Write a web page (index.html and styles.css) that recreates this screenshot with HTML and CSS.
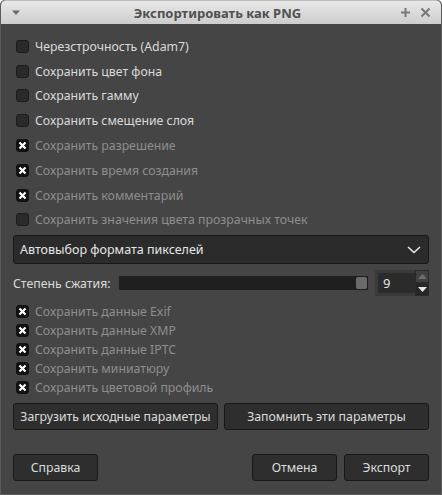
FILE: index.html
```html
<!DOCTYPE html>
<html lang="ru">
<head>
<meta charset="utf-8">
<title>Экспортировать как PNG</title>
<link rel="stylesheet" href="styles.css">
</head>
<body>
<div class="window">
  <div class="titlebar">
    <span class="tb-menu"><svg width="10" height="6" viewBox="0 0 10 6"><path d="M1 0.5h8L5 5z" fill="#6a6a6a"/></svg></span>
    <span class="tb-title">Экспортировать как PNG</span>
    <span class="tb-btns">
      <svg width="11" height="11" viewBox="0 0 11 11"><path d="M5.5 1v9M1 5.5h9" stroke="#777" stroke-width="2"/></svg>
      <svg width="11" height="11" viewBox="0 0 11 11"><path d="M1.5 1.5l8 8M9.5 1.5l-8 8" stroke="#777" stroke-width="2"/></svg>
    </span>
  </div>
  <div class="content">
    <div class="checks">
      <label class="check"><span class="box"></span><span>Черезстрочность (Adam7)</span></label>
      <label class="check"><span class="box"></span><span>Сохранить цвет фона</span></label>
      <label class="check"><span class="box"></span><span>Сохранить гамму</span></label>
      <label class="check"><span class="box"></span><span>Сохранить смещение слоя</span></label>
      <label class="check dim"><span class="box on"><svg width="9" height="9" viewBox="0 0 9 9"><path d="M1.5 1.5l6 6M7.5 1.5l-6 6" stroke="#fff" stroke-width="2.2"/></svg></span><span>Сохранить разрешение</span></label>
      <label class="check dim"><span class="box on"><svg width="9" height="9" viewBox="0 0 9 9"><path d="M1.5 1.5l6 6M7.5 1.5l-6 6" stroke="#fff" stroke-width="2.2"/></svg></span><span>Сохранить время создания</span></label>
      <label class="check dim"><span class="box on"><svg width="9" height="9" viewBox="0 0 9 9"><path d="M1.5 1.5l6 6M7.5 1.5l-6 6" stroke="#fff" stroke-width="2.2"/></svg></span><span>Сохранить комментарий</span></label>
      <label class="check dim"><span class="box"></span><span>Сохранить значения цвета прозрачных точек</span></label>
    </div>
    <div class="combo">
      <span>Автовыбор формата пикселей</span>
      <svg width="14" height="8" viewBox="0 0 14 8"><path d="M1 1l6 5.5L13 1" stroke="#e8e8e8" stroke-width="1.6" fill="none"/></svg>
    </div>
    <div class="compress">
      <span class="clabel">Степень сжатия:</span>
      <div class="trough"><div class="handle"></div></div>
      <div class="spin">
        <div class="spin-entry">9</div>
        <div class="spin-btns">
          <div class="spin-up"><svg width="9" height="5" viewBox="0 0 9 5"><path d="M0 5h9L4.5 0z" fill="#6e6e6e"/></svg></div>
          <div class="spin-down"><svg width="9" height="5" viewBox="0 0 9 5"><path d="M0 0h9L4.5 5z" fill="#e8e8e8"/></svg></div>
        </div>
      </div>
    </div>
    <div class="meta">
      <label class="check sm dim"><span class="box on"><svg width="9" height="9" viewBox="0 0 9 9"><path d="M1.5 1.5l6 6M7.5 1.5l-6 6" stroke="#fff" stroke-width="2.2"/></svg></span><span>Сохранить данные Exif</span></label>
      <label class="check sm dim"><span class="box on"><svg width="9" height="9" viewBox="0 0 9 9"><path d="M1.5 1.5l6 6M7.5 1.5l-6 6" stroke="#fff" stroke-width="2.2"/></svg></span><span>Сохранить данные XMP</span></label>
      <label class="check sm dim"><span class="box on"><svg width="9" height="9" viewBox="0 0 9 9"><path d="M1.5 1.5l6 6M7.5 1.5l-6 6" stroke="#fff" stroke-width="2.2"/></svg></span><span>Сохранить данные IPTC</span></label>
      <label class="check sm dim"><span class="box on"><svg width="9" height="9" viewBox="0 0 9 9"><path d="M1.5 1.5l6 6M7.5 1.5l-6 6" stroke="#fff" stroke-width="2.2"/></svg></span><span>Сохранить миниатюру</span></label>
      <label class="check sm dim"><span class="box on"><svg width="9" height="9" viewBox="0 0 9 9"><path d="M1.5 1.5l6 6M7.5 1.5l-6 6" stroke="#fff" stroke-width="2.2"/></svg></span><span>Сохранить цветовой профиль</span></label>
    </div>
    <div class="pair">
      <button class="btn">Загрузить исходные параметры</button>
      <button class="btn">Запомнить эти параметры</button>
    </div>
    <div class="actions">
      <button class="btn help">Справка</button>
      <div class="spacer"></div>
      <button class="btn act">Отмена</button>
      <button class="btn act">Экспорт</button>
    </div>
  </div>
</div>
</body>
</html>
```

FILE: styles.css
```css
* { box-sizing: border-box; }
html, body { margin: 0; padding: 0; background: #ffffff; }
body { font-family: "Noto Sans", "DejaVu Sans", sans-serif; font-size: 12.3px; }

.window {
  width: 442px;
  height: 495px;
  background: #454545;
  border: 1px solid #5c5c5c;
  border-top: none;
  border-radius: 5px 5px 0 0;
  overflow: hidden;
  display: flex;
  flex-direction: column;
}

.titlebar {
  height: 24px;
  flex: none;
  background: linear-gradient(#e8e8e8, #cdcdcd);
  border-top: 1px solid #bdbdbd;
  border-radius: 5px 5px 0 0;
  display: flex;
  align-items: center;
  padding: 0 10px 0 10px;
}
.tb-menu { width: 10px; display: flex; margin-top: 1px; }
.tb-title {
  flex: 1;
  text-align: center;
  font-weight: bold;
  font-size: 13px;
  color: #505050;
  margin-left: 14px;
}
.tb-btns { display: flex; gap: 9px; align-items: center; margin-right: 0; }

.content {
  flex: 1;
  padding: 10px 12px 0 12px;
  display: flex;
  flex-direction: column;
}

.checks { display: flex; flex-direction: column; }
.check {
  height: 24.8px;
  display: flex;
  align-items: center;
  gap: 6px;
  padding-left: 3px;
  color: #dadada;
}
.check.sm { height: 19px; }
.check.dim { color: #8e8e8e; }
.box {
  width: 13px;
  height: 13px;
  border-radius: 3px;
  background: #2a2a2a;
  border: 1px solid #1c1c1c;
  display: flex;
  align-items: center;
  justify-content: center;
  flex: none;
}
.box.on { background: #111; border-color: #111; }

.combo {
  margin-top: 3px;
  height: 29px;
  background: #2b2b2b;
  border: 1px solid #181818;
  border-radius: 3px;
  display: flex;
  align-items: center;
  justify-content: space-between;
  padding: 0 7px 0 6px;
  color: #e6e6e6;
  font-size: 12.5px;
}

.compress {
  margin-top: 6px;
  height: 26px;
  display: flex;
  align-items: center;
}
.clabel { color: #dadada; width: 106px; flex: none; }
.trough {
  width: 250px;
  height: 14px;
  background: #1f1f1f;
  border-radius: 1px;
  display: flex;
  justify-content: flex-end;
  align-items: center;
  padding-right: 1px;
}
.handle { width: 11px; height: 12px; background: #6a6a6a; border-radius: 2px; }
.spin {
  margin-left: 7px;
  width: 54px;
  height: 26px;
  background: #3a3a3a;
  display: flex;
  padding: 3px 0 0 3px;
}
.spin-entry {
  width: 37px;
  height: 20px;
  background: #2b2b2b;
  color: #e6e6e6;
  padding-left: 5px;
  line-height: 20px;
  font-size: 13px;
}
.spin-btns { display: flex; flex-direction: column; margin-top: -3px; width: 14px; }
.spin-up, .spin-down {
  height: 13px;
  display: flex;
  align-items: center;
  justify-content: center;
  border: 1px solid #2a2a2a;
}
.spin-up { background: #404040; }
.spin-down { background: #262626; }

.meta { margin-top: 6px; display: flex; flex-direction: column; }

.btn {
  font-family: inherit;
  font-size: 12.3px;
  color: #dcdcdc;
  background: #2e2e2e;
  border: 1px solid #181818;
  border-radius: 3px;
  height: 27px;
  padding: 0;
  margin: 0;
}
.pair {
  margin-top: 6px;
  display: grid;
  grid-template-columns: 205px 205px;
  gap: 6px;
}
.actions {
  margin-top: 24px;
  display: flex;
  gap: 7px;
}
.help { width: 85px; }
.act { width: 85px; }
.spacer { flex: 1; }
```
